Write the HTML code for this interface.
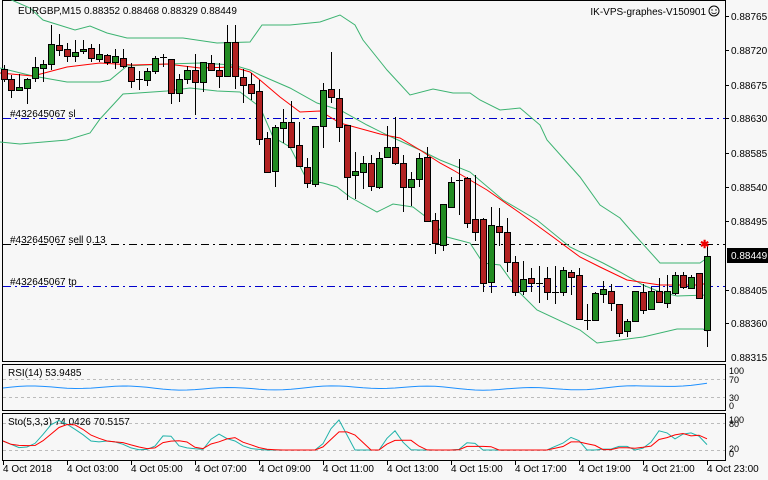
<!DOCTYPE html>
<html><head><meta charset="utf-8"><style>
html,body{margin:0;padding:0;background:#f7f7f7;width:768px;height:480px;overflow:hidden}
svg{display:block;font-family:"Liberation Sans",sans-serif;font-size:10px}
</style></head><body>
<svg id="s" width="768" height="480" viewBox="0 0 768 480" xmlns="http://www.w3.org/2000/svg">
<rect width="768" height="480" fill="#f7f7f7"/>
<rect x="2.5" y="0.5" width="723" height="361" fill="none" stroke="#000"/>
<rect x="2.5" y="364.5" width="723" height="46" fill="none" stroke="#000"/>
<rect x="2.5" y="413.5" width="723" height="47" fill="none" stroke="#000"/>
<line x1="3" y1="379.5" x2="725" y2="379.5" stroke="#bbb" stroke-dasharray="3,3"/>
<line x1="3" y1="397.5" x2="725" y2="397.5" stroke="#bbb" stroke-dasharray="3,3"/>
<line x1="3" y1="423.5" x2="725" y2="423.5" stroke="#bbb" stroke-dasharray="3,3"/>
<line x1="3" y1="450.5" x2="725" y2="450.5" stroke="#bbb" stroke-dasharray="3,3"/>
<line x1="3" y1="118.5" x2="725" y2="118.5" stroke="#0000cc" stroke-dasharray="8,4,2,4"/>
<line x1="3" y1="244.5" x2="725" y2="244.5" stroke="#000" stroke-dasharray="8,4,2,4"/>
<line x1="3" y1="286.5" x2="725" y2="286.5" stroke="#0000cc" stroke-dasharray="8,4,2,4"/>
<text x="10" y="117" fill="#000">#432645067 sl</text>
<text x="10" y="243" fill="#000">#432645067 sell 0.13</text>
<text x="10" y="285" fill="#000">#432645067 tp</text>
<polyline fill="none" stroke="#3cb371" stroke-width="1" points="0,-5 30,8 43,20 75,30 90,26 107,33 127,38 183,38 217,43 250,42 262,25 290,25 320,22 340,15 355,25 363,40 387,70 410,95 433,89 453,93 470,93 480,100 500,110 520,108 540,125 547,140 580,177 600,205 620,218 633,233 660,263 700,263 707,258"/>
<polyline fill="none" stroke="#3cb371" stroke-width="1" points="0,68 33,76 50,79 67,82 100,82 110,80 127,66 167,64 200,63 233,65 250,70 260,75 290,88 317,103 340,110 367,125 387,135 420,150 440,160 470,172 503,200 537,220 570,247 603,263 620,272 643,285 660,292 677,296 707,295"/>
<polyline fill="none" stroke="#3cb371" stroke-width="1" points="0,142 20,144 67,140 90,133 100,119 123,94 167,91 190,88 217,91 240,92 260,107 273,137 290,147 307,180 323,183 337,187 350,197 377,212 393,204 413,207 430,220 447,237 470,243 483,263 500,265 520,293 537,310 580,330 597,343 620,340 643,337 677,329 703,329 707,331"/>
<polyline fill="none" stroke="#ff0000" stroke-width="1" points="0,73 33,76 67,67 100,63 133,65 167,64 200,68 233,67 250,72 260,80 280,97 300,112 320,111 340,123 380,134 400,138 420,150 440,163 453,170 487,190 520,213 553,237 580,257 600,267 627,280 660,285 700,285 707,283"/>
<g id="c"></g>
<text x="700" y="248" fill="#e00" font-size="11" font-weight="bold">✱</text>
<text x="18" y="14" fill="#000">EURGBP,M15  0.88352 0.88468 0.88329 0.88449</text>
<text x="706" y="15" fill="#000" text-anchor="end">IK-VPS-graphes-V150901</text>
<circle cx="714" cy="11" r="5" fill="none" stroke="#000"/>
<circle cx="712" cy="10" r="0.7" fill="#000"/><circle cx="716" cy="10" r="0.7" fill="#000"/>
<path d="M711.5 12.5 Q714 15 716.5 12.5" fill="none" stroke="#000" stroke-width="0.8"/>
<g fill="#000" font-size="10">
<text x="731" y="20">0.88765</text><text x="731" y="54">0.88720</text><text x="731" y="89">0.88675</text>
<text x="731" y="122">0.88630</text><text x="731" y="157">0.88585</text><text x="731" y="191">0.88540</text>
<text x="731" y="225">0.88495</text><text x="731" y="294">0.88405</text>
<text x="731" y="327">0.88360</text><text x="731" y="361">0.88315</text>
</g>
<g stroke="#000">
<line x1="725" y1="16.5" x2="729" y2="16.5"/><line x1="725" y1="50.5" x2="729" y2="50.5"/><line x1="725" y1="85.5" x2="729" y2="85.5"/>
<line x1="725" y1="118.5" x2="729" y2="118.5"/><line x1="725" y1="153.5" x2="729" y2="153.5"/><line x1="725" y1="187.5" x2="729" y2="187.5"/>
<line x1="725" y1="221.5" x2="729" y2="221.5"/><line x1="725" y1="290.5" x2="729" y2="290.5"/><line x1="725" y1="323.5" x2="729" y2="323.5"/>
</g>
<rect x="727" y="248" width="41" height="15" fill="#000"/>
<text x="731" y="259" fill="#fff">0.88449</text>
<text x="8" y="376" fill="#000">RSI(14) 53.9485</text>
<g fill="#000" font-size="9"><text x="729" y="374">100</text><text x="729" y="383">70</text><text x="729" y="401">30</text><text x="729" y="409">0</text>
<text x="729" y="423">100</text><text x="729" y="427">80</text><text x="729" y="452">20</text><text x="729" y="457">0</text></g>
<polyline id="rsi" fill="none" stroke="#1e90ff" stroke-width="1"/>
<text x="8" y="425" fill="#000">Sto(5,3,3) 74.0426 70.5157</text>
<polyline id="k" fill="none" stroke="#20b2aa" stroke-width="1"/>
<polyline id="d" fill="none" stroke="#ff0000" stroke-width="1"/>
<g id="t" fill="#000" font-size="10"></g>
</svg>
<script>
var C=[[4,65,82,69,79,'r'],[11,75,98,79,90,'r'],[19,74,91,87,90,'g'],[27,78,104,79,88,'g'],[35,57,82,67,78,'g'],[43,60,82,64,68,'g'],[51,25,70,44,64,'g'],[59,34,56,45,50,'r'],[67,43,62,49,56,'r'],[75,40,62,52,56,'g'],[83,40,54,49,51,'g'],[91,44,62,48,58,'r'],[99,44,62,54,59,'g'],[107,54,65,55,62,'r'],[115,49,69,56,62,'g'],[123,49,68,58,66,'r'],[131,63,88,67,81,'r'],[139,71,90,79,79,'d'],[147,68,86,71,80,'g'],[155,56,74,58,71,'g'],[163,54,67,57,57,'d'],[171,59,104,59,93,'r'],[179,74,102,79,93,'g'],[187,66,84,70,79,'g'],[195,54,115,70,82,'r'],[203,62,92,62,82,'g'],[211,55,71,63,70,'r'],[219,63,88,70,76,'r'],[227,25,77,42,76,'g'],[235,25,89,42,76,'r'],[243,69,103,77,85,'r'],[251,73,100,84,93,'r'],[259,80,145,91,139,'r'],[267,132,173,138,172,'r'],[275,125,187,127,171,'g'],[283,109,143,122,128,'g'],[291,101,147,122,147,'r'],[299,122,167,145,166,'r'],[307,158,188,167,183,'r'],[315,126,187,126,184,'g'],[323,83,148,90,126,'g'],[331,52,103,89,97,'r'],[339,89,142,98,127,'r'],[347,125,200,125,177,'r'],[355,152,199,171,175,'g'],[363,156,189,163,172,'g'],[371,155,191,163,186,'r'],[379,152,189,158,187,'g'],[387,126,158,147,157,'g'],[395,117,165,147,163,'r'],[403,155,212,163,187,'r'],[411,172,206,179,187,'g'],[419,153,187,158,179,'g'],[427,147,221,157,221,'r'],[435,213,254,220,243,'r'],[443,204,251,204,245,'g'],[451,177,208,182,207,'g'],[459,159,215,180,180,'d'],[467,177,228,178,223,'r'],[475,175,241,219,232,'r'],[483,218,292,219,283,'r'],[491,207,293,225,282,'g'],[499,208,246,226,232,'r'],[507,218,272,232,262,'r'],[515,256,296,262,292,'r'],[523,261,295,279,291,'g'],[531,268,292,278,283,'r'],[539,266,303,283,283,'d'],[547,267,300,278,292,'r'],[555,266,304,292,292,'d'],[563,267,296,270,292,'g'],[571,270,295,272,277,'r'],[579,268,319,275,319,'r'],[587,304,330,320,320,'d'],[595,292,321,293,320,'g'],[603,281,303,289,294,'g'],[611,284,311,291,303,'r'],[619,304,337,304,333,'r'],[627,319,337,321,331,'g'],[635,291,322,291,321,'g'],[643,284,314,292,310,'r'],[651,287,310,291,309,'g'],[659,278,303,291,302,'r'],[667,275,308,291,303,'g'],[675,272,295,275,293,'g'],[683,272,289,275,287,'r'],[691,275,289,277,288,'g'],[699,273,298,273,298,'r'],[707,246,347,256,330,'g']];
var h='';C.forEach(function(c){var x=c[0];h+='<line x1="'+(x+.5)+'" y1="'+c[1]+'" x2="'+(x+.5)+'" y2="'+c[2]+'" stroke="#000"/>';
if(c[5]=='d'){h+='<line x1="'+(x-3)+'" y1="'+(c[3]+.5)+'" x2="'+(x+4)+'" y2="'+(c[3]+.5)+'" stroke="#000"/>';}
else{h+='<rect x="'+(x-2.5)+'" y="'+(c[3]+.5)+'" width="6" height="'+Math.max(1,c[4]-c[3])+'" fill="'+(c[5]=='g'?'#228b22':'#b22222')+'" stroke="#000"/>';}});
document.getElementById('c').innerHTML=h;
var r=[],k=[],d=[];var kv=[],dv=[];
for(var i=0;i<89;i++){var x=3+8*i;
r.push(x+','+(388-1.5*Math.sin(i*0.5)-1*Math.sin(i*0.17)-(i>80?(i-80)*0.5:0)).toFixed(1));
var cl=C[i];var kk=420+Math.min(30,Math.max(0,(cl[4]-(C[Math.max(0,i-4)][3]))*0.6+15));kv.push(kk);}
for(var i=0;i<89;i++){var s=0,n=0;for(var j=Math.max(0,i-2);j<=i;j++){s+=kv[j];n++;}dv.push(s/n);}
for(var i=0;i<89;i++){var x=3+8*i;var kk=(kv[i]+kv[Math.max(0,i-1)])/2;k.push(x+','+kk.toFixed(1));var s=0,n=0;for(var j=Math.max(0,i-3);j<=i;j++){s+=kv[j];n++;}d.push(x+','+(s/n).toFixed(1));}
document.getElementById('rsi').setAttribute('points',r.join(' '));
document.getElementById('k').setAttribute('points',k.join(' '));
document.getElementById('d').setAttribute('points',d.join(' '));
var L=['4 Oct 2018','4 Oct 03:00','4 Oct 05:00','4 Oct 07:00','4 Oct 09:00','4 Oct 11:00','4 Oct 13:00','4 Oct 15:00','4 Oct 17:00','4 Oct 19:00','4 Oct 21:00','4 Oct 23:00'],t='';
L.forEach(function(s,i){var x=4+64*i;t+='<line x1="'+(x-.5)+'" y1="460" x2="'+(x-.5)+'" y2="465" stroke="#000"/><text x="'+(x-1)+'" y="472">'+s+'</text>';});
document.getElementById('t').innerHTML=t;
</script>
</body></html>
